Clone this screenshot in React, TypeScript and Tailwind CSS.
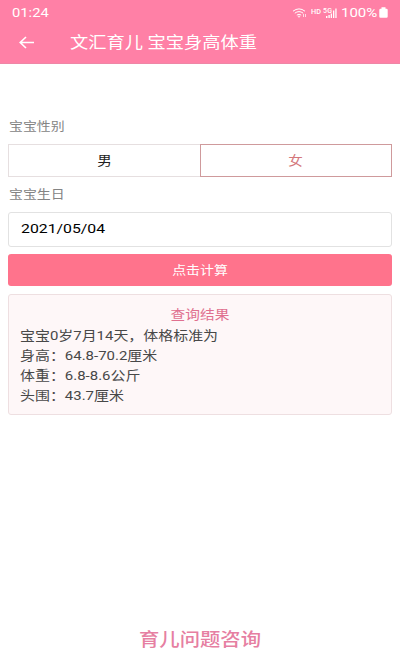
import { useState } from "react";

const results = [
  "宝宝0岁7月14天，体格标准为",
  "身高：64.8-70.2厘米",
  "体重：6.8-8.6公斤",
  "头围：43.7厘米",
];

const StatusIcons = () => {
  return (
    <div className="flex items-center h-[14px]">
      <svg width="15" height="10" viewBox="0 0 15 10" fill="none" stroke="white" strokeWidth="1">
        <path d="M1 3.2Q7 -1.4 13 3.2M2.8 5.2Q7 2 11.2 5.2M4.8 7.1Q7 5.4 9.2 7.1" />
        <path d="M6 8.2h2l-1 1.2zM11.5 6v3M13.5 6v3" strokeWidth="0.7" />
      </svg>
      <span className="ml-[4px] w-[10px] text-[6.5px] leading-none font-medium">
        <span className="inline-block origin-left scale-x-[1.12]">HD</span>
      </span>
      <svg className="ml-[2px]" width="14" height="12" viewBox="0 0 14 12" fill="white">
        <text x="0" y="5.5" fontSize="7" fontWeight="500" fontFamily="Roboto" textLength="9">
          5G
        </text>
        <path d="M3 9h1.4v2H3zM5.4 8h1.4v3H5.4zM7.7 6.5h1.3V11H7.7zM10 3.5h1.3V11H10zM12.3 1.5h1.3V11h-1.3z" />
      </svg>
      <span className="ml-[4px] w-[38px] text-[12.5px] leading-[14px] whitespace-nowrap">
        <span className="inline-block origin-left scale-x-[1.2]">100%</span>
      </span>
      <svg width="9" height="11" viewBox="0 0 9 11" fill="white">
        <path d="M2.5 0.3h4V1.8h1Q8.7 1.8 8.7 3v6.5q0 1.2-1.2 1.2h-6q-1.2 0-1.2-1.2V3q0-1.2 1.2-1.2h1z" />
      </svg>
    </div>
  );
};

export default function App() {
  const [gender, setGender] = useState("女");

  return (
    <div className="flex flex-col w-[400px] h-[666px] bg-white overflow-hidden font-['Roboto','Noto_Sans_CJK_SC',sans-serif]">
      <header className="h-[64px] shrink-0 bg-[#ff80a6] text-white border-b border-[#ee86a6]">
        <div className="flex items-center justify-between h-[25px] pl-[12px] pr-[12px]">
          <span className="text-[12.5px] leading-[14px]">
            <span className="inline-block origin-left scale-x-[1.18]">01:24</span>
          </span>
          <StatusIcons />
        </div>
        <div className="flex items-center h-[35px] pl-[19px]">
          <svg width="16" height="13" viewBox="0 0 16 13" fill="none" stroke="white" strokeWidth="1.6">
            <path d="M15 6.5H1.5M7 1L1.2 6.5L7 12" />
          </svg>
          <h1 className="ml-[35px] text-[16px] leading-[24px] whitespace-nowrap origin-left scale-x-[1.14]">
            文汇育儿 宝宝身高体重
          </h1>
        </div>
      </header>

      <main className="flex flex-col px-[8px] pt-[54px]">
        <label className="h-[18px] pl-[1px] text-[12px] leading-[18px] text-[#848484]">
          <span className="inline-block origin-left scale-x-[1.16]">宝宝性别</span>
        </label>
        <div className="flex mt-[8px] h-[33px] w-[384px] text-[13px]">
          {["男", "女"].map((item) => (
            <button
              key={item}
              onClick={() => setGender(item)}
              className={[
                "flex-1 border leading-none",
                gender === item
                  ? "border-[#cf9a9c] text-[#d4787c]"
                  : "border-[#e6dfe0] border-r-0 text-[#222222]",
              ].join(" ")}
            >
              <span className="inline-block scale-x-[1.12]">{item}</span>
            </button>
          ))}
        </div>
        <label className="mt-[9px] h-[18px] pl-[1px] text-[12px] leading-[18px] text-[#848484]">
          <span className="inline-block origin-left scale-x-[1.16]">宝宝生日</span>
        </label>
        <div className="mt-[8px] flex items-center h-[35px] rounded-[3px] border border-[#e2e2e2] pl-[12px] pb-[2px] text-[13.5px] text-black">
          <span className="inline-block origin-left scale-x-[1.17]">2021/05/04</span>
        </div>
        <button className="mt-[7px] h-[32px] rounded-[3px] bg-[#ff738c] pt-[2px] text-white text-[12px] leading-none">
          <span className="inline-block scale-x-[1.16]">点击计算</span>
        </button>
        <section className="mt-[8px] h-[121px] rounded-[3px] border border-[#eedfe1] bg-[#fef7f8] pl-[11px] pt-[9px] text-[13px] text-[#484848]">
          <h2 className="h-[22px] pr-[11px] text-center leading-[22px] text-[#e0708f]">
            <span className="inline-block scale-x-[1.13]">查询结果</span>
          </h2>
          {results.map((line) => (
            <p key={line} className="h-[20px] leading-[20px] whitespace-nowrap origin-left scale-x-[1.15]">
              {line}
            </p>
          ))}
        </section>
      </main>

      <footer className="mt-auto h-[41px] text-center text-[18px] leading-[30px] font-medium text-[#e67fa2]">
        <span className="inline-block scale-x-[1.13]">育儿问题咨询</span>
      </footer>
    </div>
  );
}
